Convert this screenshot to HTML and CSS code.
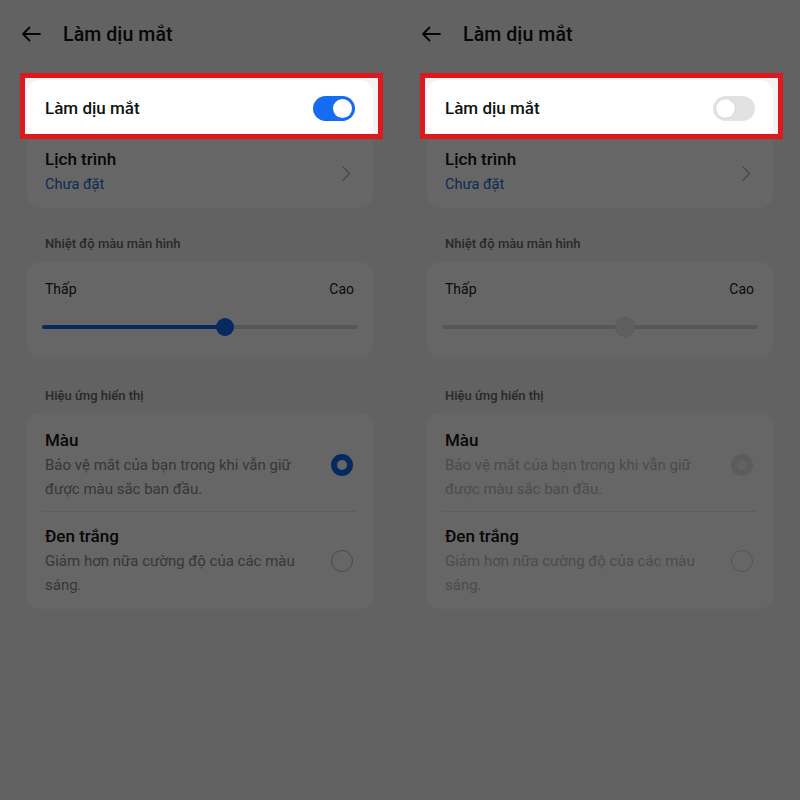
FILE: index.html
```html
<!DOCTYPE html>
<html lang="vi">
<head>
<meta charset="utf-8">
<title>Làm dịu mắt</title>
<link rel="stylesheet" href="styles.css">
</head>
<body>
<div class="screen">
  <section class="panel">
    <header class="topbar">
      <svg class="back" viewBox="0 0 20 16" width="20" height="16"><path d="M19 8H2M8.5 1.5L2 8l6.5 6.5" fill="none" stroke="#111" stroke-width="1.8" stroke-linecap="round" stroke-linejoin="round"/></svg>
      <h1 class="title">Làm dịu mắt</h1>
    </header>
    <div class="card">
      <div class="row row-main">
        <span class="row-title">Làm dịu mắt</span>
        <span class="switch on"><span class="knob"></span></span>
        <span class="mark"></span>
      </div>
      <div class="row row-link">
        <div class="texts">
          <div class="row-title">Lịch trình</div>
          <div class="row-sub">Chưa đặt</div>
        </div>
        <svg class="chev" viewBox="0 0 9 15" width="9" height="15"><path d="M1 1l6.5 6.5L1 14" fill="none" stroke="#b5b5b5" stroke-width="1.4" stroke-linecap="round" stroke-linejoin="round"/></svg>
      </div>
    </div>
    <div class="label">Nhiệt độ màu màn hình</div>
    <div class="card slider-card">
      <div class="ends"><span>Thấp</span><span>Cao</span></div>
      <div class="track"><div class="fill" style="width:58%"></div><div class="thumb" style="left:58%"></div></div>
    </div>
    <div class="label label-2">Hiệu ứng hiển thị</div>
    <div class="card options">
      <div class="opt opt-first">
        <div class="opt-text">
          <div class="opt-title">Màu</div>
          <div class="opt-desc">Bảo vệ mắt của bạn trong khi vẫn giữ được màu sắc ban đầu.</div>
        </div>
        <span class="radio checked"></span>
      </div>
      <div class="sep"></div>
      <div class="opt opt-second">
        <div class="opt-text">
          <div class="opt-title">Đen trắng</div>
          <div class="opt-desc">Giảm hơn nữa cường độ của các màu sáng.</div>
        </div>
        <span class="radio"></span>
      </div>
    </div>
  </section>

  <section class="panel disabled">
    <header class="topbar">
      <svg class="back" viewBox="0 0 20 16" width="20" height="16"><path d="M19 8H2M8.5 1.5L2 8l6.5 6.5" fill="none" stroke="#111" stroke-width="1.8" stroke-linecap="round" stroke-linejoin="round"/></svg>
      <h1 class="title">Làm dịu mắt</h1>
    </header>
    <div class="card">
      <div class="row row-main">
        <span class="row-title">Làm dịu mắt</span>
        <span class="switch"><span class="knob"></span></span>
        <span class="mark"></span>
      </div>
      <div class="row row-link">
        <div class="texts">
          <div class="row-title">Lịch trình</div>
          <div class="row-sub">Chưa đặt</div>
        </div>
        <svg class="chev" viewBox="0 0 9 15" width="9" height="15"><path d="M1 1l6.5 6.5L1 14" fill="none" stroke="#b5b5b5" stroke-width="1.4" stroke-linecap="round" stroke-linejoin="round"/></svg>
      </div>
    </div>
    <div class="label">Nhiệt độ màu màn hình</div>
    <div class="card slider-card">
      <div class="ends"><span>Thấp</span><span>Cao</span></div>
      <div class="track"><div class="fill" style="width:0%"></div><div class="thumb" style="left:58%"></div></div>
    </div>
    <div class="label label-2">Hiệu ứng hiển thị</div>
    <div class="card options">
      <div class="opt opt-first">
        <div class="opt-text">
          <div class="opt-title">Màu</div>
          <div class="opt-desc">Bảo vệ mắt của bạn trong khi vẫn giữ được màu sắc ban đầu.</div>
        </div>
        <span class="radio checked"></span>
      </div>
      <div class="sep"></div>
      <div class="opt opt-second">
        <div class="opt-text">
          <div class="opt-title">Đen trắng</div>
          <div class="opt-desc">Giảm hơn nữa cường độ của các màu sáng.</div>
        </div>
        <span class="radio"></span>
      </div>
    </div>
  </section>
</div>
</body>
</html>
```

FILE: styles.css
```css
* { box-sizing: border-box; }
html, body { margin: 0; padding: 0; }
body {
  font-family: Roboto, "Noto Sans", "Liberation Sans", sans-serif;
  color: #111;
  background: #f4f4f4;
}
.screen {
  display: flex;
  width: 800px;
  height: 800px;
}
.panel {
  position: relative;
  overflow: hidden;
  width: 400px;
  height: 800px;
  background: #f4f4f4;
  display: flex;
  flex-direction: column;
}
.topbar {
  height: 68px;
  display: flex;
  align-items: center;
  padding-left: 21px;
}
.back { display: block; }
.title {
  margin: 0 0 0 22px;
  font-size: 19.5px;
  font-weight: 500;
  color: #111;
  letter-spacing: 0.1px;
}
.card {
  margin: 0 27px;
  background: #fff;
  border-radius: 14px;
}
.row {
  display: flex;
  align-items: center;
  justify-content: space-between;
}
.row-main {
  position: relative;
  height: 56px;
  margin-top: 12px;
  padding: 0 18px;
}
.panel > .card:first-of-type { margin-top: 12px; }
.row-main { margin-top: 0; }
.row-title {
  font-size: 17px;
  font-weight: 500;
  line-height: 22px;
  color: #111;
}
.switch {
  width: 42px;
  height: 25px;
  border-radius: 13px;
  background: #e2e2e2;
  display: flex;
  align-items: center;
  padding: 0 3px;
}
.switch .knob {
  width: 19px;
  height: 19px;
  border-radius: 50%;
  background: #fff;
  box-shadow: 0 0 1px rgba(0,0,0,.25);
}
.switch.on {
  background: #156cf3;
  justify-content: flex-end;
}
.switch.on .knob { box-shadow: none; }
.mark {
  position: absolute;
  top: -7px;
  left: -7px;
  right: -10px;
  bottom: -3px;
  border: 5px solid #dc1a1e;
  box-shadow: 0 0 0 1400px rgba(0,0,0,.6);
  z-index: 10;
  pointer-events: none;
}
.row-link {
  padding: 12px 22px 13px 18px;
}
.row-sub {
  margin-top: 5px;
  font-size: 14.5px;
  line-height: 20px;
  color: #1a6bd6;
}
.chev { display: block; margin-top: 4px; }
.label {
  margin: 27px 0 9px 45px;
  font-size: 13px;
  font-weight: 500;
  line-height: 18px;
  color: #676767;
}
.label-2 { margin-top: 28px; margin-bottom: 8px; }
.slider-card {
  height: 97px;
  padding: 17px 19px 0 18px;
}
.ends {
  display: flex;
  justify-content: space-between;
  font-size: 14px;
  line-height: 20px;
  color: #222;
}
.track {
  position: relative;
  margin: 26px -4px 0 -3px;
  height: 4px;
  border-radius: 2px;
  background: #dadada;
}
.fill {
  height: 4px;
  border-radius: 2px;
  background: #106af0;
}
.thumb {
  position: absolute;
  top: 50%;
  width: 18px;
  height: 18px;
  margin: -9px 0 0 -9px;
  border-radius: 50%;
  background: #106af0;
}
.options { padding: 0; }
.opt {
  display: flex;
  align-items: center;
  gap: 12px;
  padding: 16px 20px 10px 18px;
}
.opt-second { padding: 13px 20px 12px 18px; }
.opt-text { flex: 1; }
.opt-title {
  font-size: 17px;
  font-weight: 500;
  line-height: 22px;
  color: #111;
}
.opt-desc {
  margin-top: 2px;
  font-size: 15px;
  line-height: 24px;
  color: #8a8a8a;
}
.radio {
  flex: none;
  width: 22px;
  height: 22px;
  border-radius: 50%;
  border: 1.5px solid #b9b9b9;
}
.radio.checked {
  border: 6.5px solid #106af0;
}
.sep {
  margin: 0 17px 0 15px;
  border-top: 1px solid #e8e8e8;
}

/* disabled panel */
.disabled .thumb {
  background: #ededed;
  box-shadow: 0 0 0 1px #e2e2e2;
}
.disabled .opt-desc { color: #bdbdbd; }
.disabled .radio { border-color: #d4d4d4; }
.disabled .radio.checked {
  border-color: #e6e6e6;
  background: #f6f6f6;
}
```
